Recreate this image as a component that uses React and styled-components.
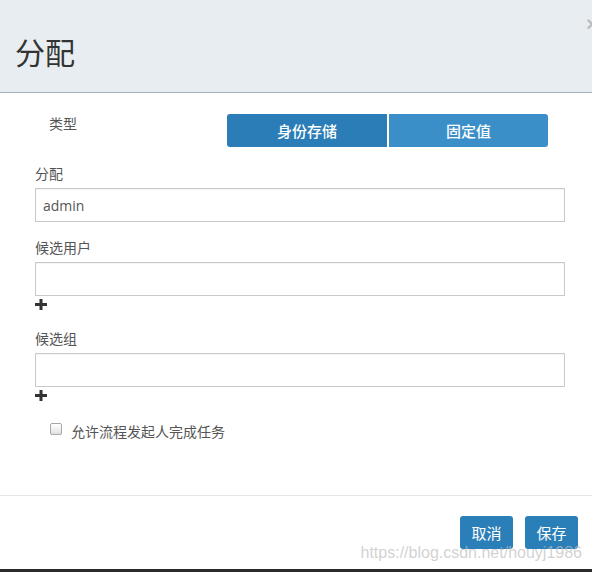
import React from "react";
import styled, { createGlobalStyle } from "styled-components";

const GlobalStyle = createGlobalStyle`
  html, body {
    margin: 0;
    padding: 0;
    background: #ffffff;
    overflow: hidden;
  }
  * {
    box-sizing: border-box;
  }
`;

const Modal = styled.div`
  position: relative;
  width: 592px;
  height: 572px;
  display: flex;
  flex-direction: column;
  overflow: hidden;
  font-family: "Open Sans", "Noto Sans CJK SC", sans-serif;
  border-bottom: 3px solid #2b2b2b;
`;

const Header = styled.div`
  position: relative;
  height: 93px;
  flex-shrink: 0;
  padding: 30px 0 0 15px;
  background-color: #e8edf1;
  border-bottom: 1px solid #a9b1bd;
`;

const Title = styled.h3`
  margin: 0;
  font-family: "Noto Sans CJK SC", sans-serif;
  font-size: 30px;
  font-weight: 400;
  line-height: 42px;
  color: #333333;
`;

const Close = styled.span`
  position: absolute;
  left: 586px;
  top: 13px;
  font-family: "Liberation Sans", sans-serif;
  font-size: 21px;
  font-weight: bold;
  line-height: 21px;
  color: #000000;
  opacity: 0.2;
`;

const Body = styled.div`
  flex: 1;
  padding: 21px 27px 0 35px;
  display: flex;
  flex-direction: column;
`;

const TypeRow = styled.div`
  display: flex;
  align-items: flex-start;
  padding-left: 14px;
  margin-bottom: 16px;
`;

const TypeLabel = styled.span`
  width: 178px;
  font-family: "Noto Sans CJK SC", sans-serif;
  font-size: 14px;
  line-height: 18px;
  color: #555555;
`;

const ToggleGroup = styled.div`
  display: flex;
  gap: 2px;
`;

const Toggle = styled.button`
  width: ${(p) => p.$width}px;
  height: 33px;
  border: none;
  padding: 0;
  font-family: "Noto Sans CJK SC", sans-serif;
  font-size: 15px;
  font-weight: 500;
  color: #ffffff;
  background-color: ${(p) => (p.$active ? "#2a7db7" : "#3a8fc9")};
  border-radius: ${(p) => (p.$first ? "3px 0 0 3px" : "0 3px 3px 0")};
  cursor: pointer;
`;

const Field = styled.div`
  display: flex;
  flex-direction: column;
  margin-bottom: ${(p) => p.$gap || 0}px;
`;

const Label = styled.label`
  font-family: "Noto Sans CJK SC", sans-serif;
  font-size: 14px;
  line-height: 20px;
  color: #555555;
  margin-bottom: 5px;
`;

const Input = styled.input`
  width: 530px;
  height: 34px;
  padding: 0 7px;
  border: 1px solid #c9c9c9;
  border-radius: 0;
  outline: none;
  box-shadow: inset 0 1px 1px rgba(0, 0, 0, 0.05);
  font-family: "Open Sans", "Noto Sans CJK SC", sans-serif;
  font-size: 14px;
  color: #555555;
`;

const AddRow = styled.div`
  height: 14px;
  padding-top: 3px;
  margin-bottom: ${(p) => p.$gap || 0}px;

  svg {
    display: block;
  }
`;

const CheckRow = styled.div`
  display: flex;
  align-items: flex-start;
  gap: 9px;
  padding-left: 15px;
  margin-top: 20px;
`;

const CheckBox = styled.span`
  width: 12px;
  height: 12px;
  margin-top: 2px;
  border: 1px solid #a8a8a8;
  border-radius: 2px;
  background: linear-gradient(#ffffff, #e2e2e2);
`;

const CheckText = styled.span`
  font-family: "Noto Sans CJK SC", sans-serif;
  font-size: 14px;
  line-height: 20px;
  color: #555555;
`;

const Footer = styled.div`
  height: 74px;
  flex-shrink: 0;
  border-top: 1px solid #e5e5e5;
  padding: 20px 14px 0 0;
  display: flex;
  justify-content: flex-end;
  align-items: flex-start;
  gap: 12px;
`;

const Button = styled.button`
  width: 53px;
  height: 33px;
  padding: 0;
  border: none;
  border-radius: 3px;
  background-color: #2a7fb8;
  font-family: "Noto Sans CJK SC", sans-serif;
  font-size: 15px;
  color: #ffffff;
  cursor: pointer;
`;

const Watermark = styled.span`
  position: absolute;
  right: 10px;
  top: 543px;
  font-family: "Liberation Sans", sans-serif;
  font-size: 16px;
  line-height: 20px;
  color: rgba(190, 190, 190, 0.7);
  pointer-events: none;
`;

function PlusIcon() {
  return (
    <svg width="12" height="11" viewBox="0 0 12 11">
      <path d="M4.5 0h3v4H12v3H7.5v4h-3V7H0V4h4.5z" fill="#333333" />
    </svg>
  );
}

export default function App() {
  return (
    <>
      <GlobalStyle />
      <Modal>
        <Header>
          <Title>分配</Title>
          <Close>×</Close>
        </Header>
        <Body>
          <TypeRow>
            <TypeLabel>类型</TypeLabel>
            <ToggleGroup>
              <Toggle $width={160} $active $first>
                身份存储
              </Toggle>
              <Toggle $width={159}>固定值</Toggle>
            </ToggleGroup>
          </TypeRow>
          <Field $gap={15}>
            <Label>分配</Label>
            <Input defaultValue="admin" />
          </Field>
          <Field>
            <Label>候选用户</Label>
            <Input />
          </Field>
          <AddRow $gap={18}>
            <PlusIcon />
          </AddRow>
          <Field>
            <Label>候选组</Label>
            <Input />
          </Field>
          <AddRow>
            <PlusIcon />
          </AddRow>
          <CheckRow>
            <CheckBox />
            <CheckText>允许流程发起人完成任务</CheckText>
          </CheckRow>
        </Body>
        <Footer>
          <Button>取消</Button>
          <Button>保存</Button>
        </Footer>
        <Watermark>https://blog.csdn.net/houyj1986</Watermark>
      </Modal>
    </>
  );
}
